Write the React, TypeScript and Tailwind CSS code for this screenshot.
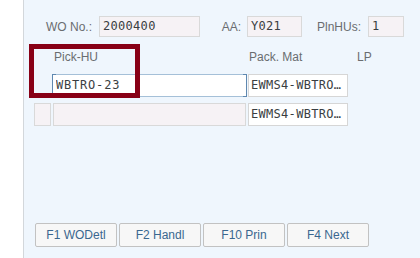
import React from 'react';

const label = "font-['Liberation_Sans',Arial,sans-serif] text-[12px] text-[#6a6d70] whitespace-nowrap";
const mono = "font-['DejaVu_Sans_Mono','Liberation_Mono',monospace] text-[12px] tracking-[0.3px] text-[#3a3e42] whitespace-nowrap overflow-hidden";

const buttons = ['F1 WODetl', 'F2 Handl', 'F10 Prin', 'F4 Next'];

export default function App() {
  return (
    <div className="relative flex w-[420px] h-[258px] overflow-hidden bg-white">
      {/* left gutter */}
      <div className="w-[24px] h-full bg-white border-r border-[#d3d7db]" />

      <div className="flex-1 flex flex-col h-full bg-[#eff6fd] pt-[16px] pb-[11px]">
        {/* header fields */}
        <div className="flex items-center h-[21px]">
          <div className={`${label} w-[75px] text-right pr-[7px]`}>WO No.:</div>
          <div className={`${mono} w-[101px] h-full bg-[#f6f2f5] border border-[#d9d9d9] pl-[3px] leading-[19px]`}>2000400</div>
          <div className={`${label} w-[47px] text-right pr-[6px]`}>AA:</div>
          <div className={`${mono} w-[55px] h-full bg-[#f6f2f5] border border-[#d9d9d9] pl-[3px] leading-[19px]`}>Y021</div>
          <div className={`${label} w-[66px] text-right pr-[7px]`}>PlnHUs:</div>
          <div className={`${mono} w-[36px] h-full bg-[#f6f2f5] border border-[#d9d9d9] pl-[3px] leading-[19px]`}>1</div>
        </div>

        {/* table column titles */}
        <div className="flex items-center h-[18px] mt-[11px] pl-[30px]">
          <div className={`${label} w-[195px]`}>Pick-HU</div>
          <div className={`${label} w-[108px]`}>Pack. Mat</div>
          <div className={label}>LP</div>
        </div>

        {/* row 1 (focused) */}
        <div className="flex h-[23px] mt-[8px] pl-[28px]">
          <div className="relative w-[195px] h-full bg-white border border-[#a5c0d8]">
            <span className={`${mono} absolute left-[3px] top-0 leading-[21px] tracking-[0.8px]`}>WBTRO-23</span>
            <span className="absolute -left-px -top-px -bottom-px w-[4px] border-l border-t border-b border-[#5f88b0]" />
            <span className="absolute -right-px -top-px -bottom-px w-[4px] border-r border-t border-b border-[#5f88b0]" />
          </div>
          <div className={`${mono} ml-[1px] w-[100px] h-full bg-white border border-[#d6d6d6] pl-[2px] leading-[21px]`}>EWMS4-WBTRO…</div>
        </div>

        {/* row 2 */}
        <div className="flex h-[23px] mt-[6px] pl-[10px]">
          <div className="w-[17px] h-full bg-[#f6f2f5] border border-[#d9d9d9]" />
          <div className="ml-[2px] w-[193px] h-full bg-[#f6f2f5] border border-[#d9d9d9]" />
          <div className={`${mono} ml-[2px] w-[100px] h-full bg-white border border-[#d6d6d6] pl-[2px] leading-[21px]`}>EWMS4-WBTRO…</div>
        </div>

        {/* function keys */}
        <div className="mt-auto flex gap-[2px] pl-[11px]">
          {buttons.map((b) => (
            <button
              key={b}
              className="w-[82px] h-[24px] rounded-[2px] bg-[#f7f7f7] border border-[#c2c2c2] font-['Liberation_Sans',Arial,sans-serif] text-[12px] text-[#3a678f]"
            >
              {b}
            </button>
          ))}
        </div>
      </div>

      {/* highlight frame */}
      <div className="absolute left-[29px] top-[44px] w-[111px] h-[54px] border-[5px] border-[#880016]" />
    </div>
  );
}
